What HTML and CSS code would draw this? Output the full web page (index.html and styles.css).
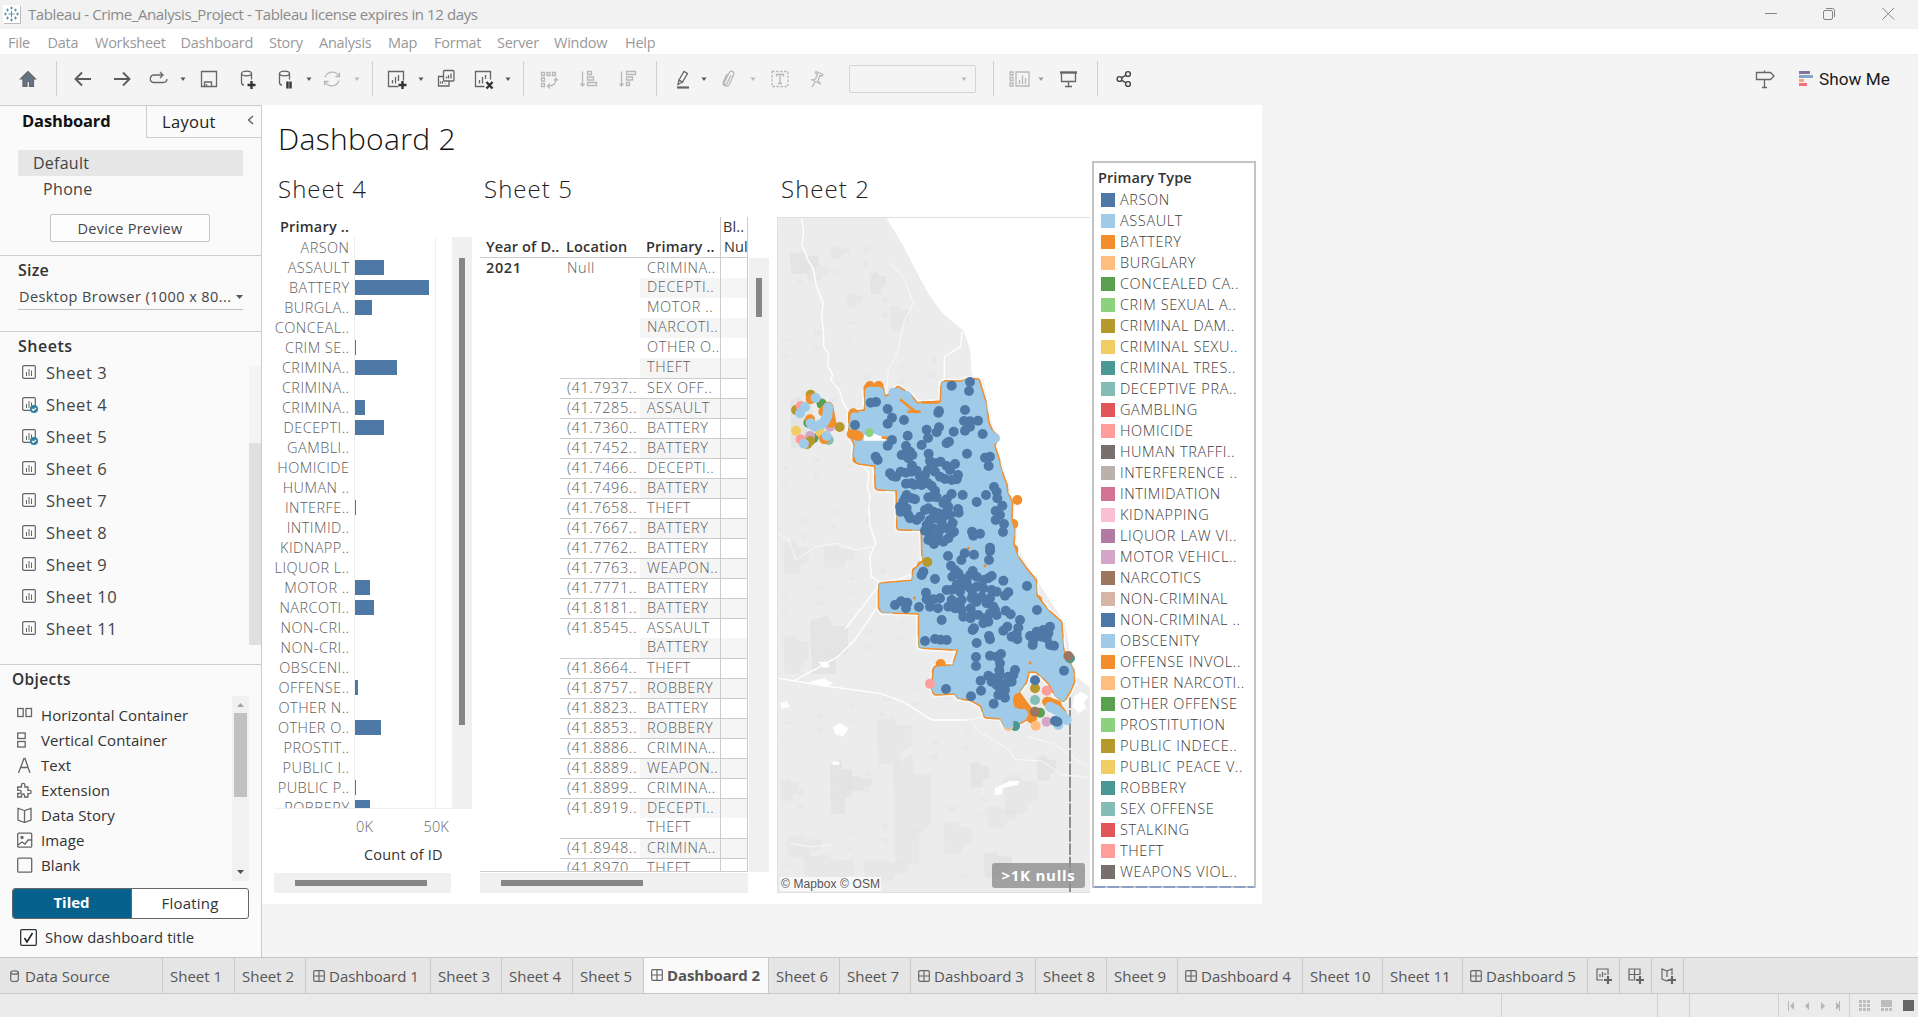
FILE: index.html
```html
<!DOCTYPE html>
<html lang="en">
<head>
<meta charset="utf-8">
<title>Tableau - Crime_Analysis_Project</title>
<link rel="stylesheet" href="styles.css">
</head>
<body>
<svg class="defs" aria-hidden="true">
  <symbol id="caret" viewBox="0 0 8 22"><path d="M1.5 9.5h5L4 13z" fill="currentColor"/></symbol>
  <symbol id="sheet" viewBox="0 0 14 14"><rect x=".7" y=".7" width="12.6" height="12.6" rx="1"/><path d="M4.500 7v4M7 4v7M9.500 5.500v5.500" stroke-width="1"/></symbol>
  <symbol id="dash" viewBox="0 0 12 12"><rect x=".7" y=".7" width="10.600" height="10.600" rx="1"/><path d="M6 1v10M1 6h10"/></symbol>
</svg>
<div class="app">
  <header class="titlebar">
    <svg class="logo" width="18" height="19" viewBox="0 0 18 19"><rect x="0" y="0" width="17" height="18" fill="#fff"/><path d="M17.500 1v17.500H1" fill="none" stroke="#bbb"/><path d="M8.500 6v6M5.500 9h6M8.500 1.500v3M7 3h3M8.500 13.500v3M7 15h3M1 9h3M2.500 7.500v3M13 9h3M14.500 7.500v3M4.500 3.500v3M3 5h3M12.500 3.500v3M11 5h3M4.500 11.500v3M3 13h3M12.500 11.500v3M11 13h3" stroke="#5a94b8" fill="none"/></svg>
    <span class="title">Tableau - Crime_Analysis_Project - Tableau license expires in 12 days</span>
    <svg class="win" width="140" height="20" viewBox="0 0 140 20" fill="none" stroke="#858585"><path d="M5 9.500h12M122.500 4l11.500 11.500M134 4l-11.500 11.500"/><rect x="63.500" y="6.500" width="9" height="9" rx="1.500"/><path d="M66 4.500h6.500a2 2 0 0 1 2 2V13"/></svg>
  </header>
  <nav class="menu"><span>File</span><span>Data</span><span>Worksheet</span><span>Dashboard</span><span>Story</span><span>Analysis</span><span>Map</span><span>Format</span><span>Server</span><span>Window</span><span>Help</span></nav>
  <div class="toolbar">
    <svg class="ic" viewBox="0 0 22 22"><path d="M11 3.500L3.500 11H6v7.500h4v-5h2.500v5h4V11h2z" fill="#667384"/></svg>
    <i class="sep"></i>
    <svg class="ic bold" viewBox="0 0 22 22"><path d="M19 11H4M10 4.500L3.500 11l6.500 6.500"/></svg>
    <svg class="ic bold" viewBox="0 0 22 22"><path d="M3 11h15M12 4.500l6.500 6.500-6.500 6.500"/></svg>
    <svg class="ic mid" viewBox="0 0 22 22"><path d="M15 7H5.500a3.800 3.800 0 0 0 0 7.500h10a3.700 3.700 0 0 0 3.500-3.500M12 4l3 3-3 3"/></svg>
    <svg class="car"><use href="#caret"/></svg>
    <svg class="ic mid" viewBox="0 0 22 22"><path d="M3.500 3.500h15v15h-15zM6.500 18v-4h7v4M8.500 16v2"/></svg>
    <svg class="ic mid" viewBox="0 0 22 22"><ellipse cx="9.500" cy="5.500" rx="5" ry="2.300"/><path d="M4.500 5.500v9.500a2.500 2.500 0 0 0 2.500 2M14.500 5.500v6"/><path class="heavy" d="M14.500 13v8M10.500 17h8"/></svg>
    <svg class="ic mid" viewBox="0 0 22 22"><ellipse cx="10.500" cy="5.500" rx="5" ry="2.300"/><path d="M5.500 5.500v9.500a2.500 2.500 0 0 0 2.500 2M15.500 5.500v6"/><path class="heavy" d="M13.500 13.500v7M16.500 13.500v7"/></svg>
    <svg class="car"><use href="#caret"/></svg>
    <svg class="ic off" viewBox="0 0 22 22"><path d="M4 9.500a7.500 7.500 0 0 1 14-1M18 12.500a7.500 7.500 0 0 1-14 1M18.500 4.500v4h-4M3.500 17.500v-4h4"/></svg>
    <svg class="car faint"><use href="#caret"/></svg>
    <i class="sep"></i>
    <svg class="ic mid" viewBox="0 0 22 22"><path d="M11.500 18.500h-10v-15h15v9M5.500 12v3.500M8.500 9v6.500M11.500 7v6"/><path class="heavy" d="M15.500 13v8M11.500 17h8"/></svg>
    <svg class="car"><use href="#caret"/></svg>
    <svg class="ic mid" viewBox="0 0 22 22"><rect x="8.500" y="2.500" width="10.500" height="10.500" rx="1"/><path d="M11.500 8.500v2M13.500 7v3.500M16 5.500v5M8.500 8.500h-5v9.500h10.500v-5M5.500 13.500v2M7.500 13v2.500M10 15v.5"/></svg>
    <svg class="ic mid" viewBox="0 0 22 22"><path d="M10.500 18.500h-9v-15h15v8M5.500 12v3.500M8.500 9v6.500M11.500 7v4"/><path class="heavy" d="M12.500 14l6 6.500M18.500 14l-6 6.500"/></svg>
    <svg class="car"><use href="#caret"/></svg>
    <i class="sep"></i>
    <svg class="ic off" viewBox="0 0 22 22"><path d="M3.500 4.500h3v3h-3zM9 4.500h3v3H9zM14.500 4.500h3v3h-3zM3.500 10h3v3h-3zM3.500 15.500h3v3h-3zM18 11c0 4-2 7-8 7M16 12.500l2-2 2 2M12 15.500L9.500 18l2.500 2.500"/></svg>
    <svg class="ic off" viewBox="0 0 22 22"><path d="M4.500 3.500V18M2.500 15.500l2 2.500 2-2.500M9.500 3.500h4v3h-4zM9.500 9h6v3h-6zM9.500 14.500h9v3h-9z"/></svg>
    <svg class="ic off" viewBox="0 0 22 22"><path d="M4.500 3.500V18M2.500 15.500l2 2.500 2-2.500M9.500 3.500h9v3h-9zM9.500 9h6v3h-6zM9.500 14.500h3v3h-3z"/></svg>
    <i class="sep"></i>
    <svg class="ic mid" viewBox="0 0 22 22"><path d="M7 12l5-8.500 3.500 2-5 8.500zM7 12l-1 4.500 4.500-2.500"/><path d="M5 19.500h12" stroke-width="2.200"/></svg>
    <svg class="car"><use href="#caret"/></svg>
    <svg class="ic off" viewBox="0 0 22 22"><path d="M13 7l-4 8.500c-1 2-3.500 1-2.700-1L11 5c1.500-3.500 6-1.500 4.500 2l-4 9c-2 4-8 2-6-2.500L9 6"/></svg>
    <svg class="car faint"><use href="#caret"/></svg>
    <svg class="ic off" viewBox="0 0 22 22"><rect x="3" y="3.500" width="16" height="15" stroke-dasharray="2.500 1.500"/><path d="M7.500 8.500v-2h7v2M11 6.500v9M9 15.500h4"/></svg>
    <svg class="ic off" viewBox="0 0 22 22"><path d="M10 3.500l7 3-1 1.500-2-.5-2 5 2 3-8-3.500 3.500-1 2-5-2-1zM9 14l-3 5"/></svg>
    <div class="select"><svg class="car faint"><use href="#caret"/></svg></div>
    <i class="sep"></i>
    <svg class="ic off" viewBox="0 0 22 22"><path d="M2 4h3v3H2zM2 9.500h3v3H2zM2 15h3v3H2zM8 4h13v14H8zM11.500 12v4M14.500 7.500V16M17.500 10v6"/></svg>
    <svg class="car faint2"><use href="#caret"/></svg>
    <svg class="ic mid" viewBox="0 0 22 22"><path d="M4.500 5v8.500h14V5M11.500 13.500v5M8 18.500h7"/><path d="M3 4.500h17" stroke-width="2.400"/></svg>
    <i class="sep"></i>
    <svg class="ic dark" viewBox="0 0 22 22"><circle cx="6.500" cy="11" r="2.400"/><circle cx="15" cy="6" r="2.400"/><circle cx="15" cy="16" r="2.400"/><path d="M8.700 9.700l4-2.400M8.700 12.300l4 2.400"/></svg>
    <svg class="ic mid" viewBox="0 0 22 22"><path d="M10.500 2.500v2M10.500 11.500v8M8 19.500h5M2.500 4.500h14l3.500 3.500-3.500 3.500h-14z"/></svg>
    <div class="showme"><svg width="15" height="16" viewBox="0 0 15 16"><path d="M0 0h11v3H0z" fill="#86739a"/><path d="M0 4h14v3H0z" fill="#84a4ca"/><path d="M0 8h5v3H0z" fill="#f3a77c"/><path d="M0 12h8v3H0z" fill="#f56f81"/></svg><span>Show Me</span></div>
  </div>
  <main class="work">
    <aside class="side">
      <div class="sidetabs"><b>Dashboard</b><div class="laytab"><span>Layout</span><svg width="8" height="12" viewBox="0 0 8 12"><path d="M6 2L1.500 6 6 10" fill="none" stroke="#555" stroke-width="1.200"/></svg></div></div>
      <section class="device"><div class="default">Default</div><div class="phone">Phone</div><div class="preview">Device Preview</div></section>
      <section class="size"><h3>Size</h3><div class="sizesel"><span>Desktop Browser (1000 x 80...</span><svg width="7" height="4" viewBox="0 0 7 4"><path d="M0 0h7L3.500 4z" fill="#555"/></svg></div></section>
      <section class="sheets"><h3>Sheets</h3><div class="sheetbox"><div class="list" id="sheetList"></div><div class="sb1"><i></i></div></div></section>
      <section class="objects"><h4>Objects</h4>
        <div class="objbox"><div class="objlist">
          <div><svg viewBox="0 0 16 16"><rect x=".7" y="1.500" width="5.500" height="8"/><rect x="9" y="1.500" width="5.500" height="8"/></svg>Horizontal Container</div>
          <div><svg viewBox="0 0 16 16"><rect x=".7" y="1" width="7.500" height="5.500"/><rect x=".7" y="9.500" width="7.500" height="5.500"/></svg>Vertical Container</div>
          <div><svg viewBox="0 0 16 16"><path d="M1.500 16L7 1.500h1L13 16M3.500 10.500h8"/></svg>Text</div>
          <div><svg viewBox="0 0 16 16"><path d="M.7 5H4.500V3a1.700 1.700 0 0 1 3.400 0v2h3v3.300h1.600a1.700 1.700 0 0 1 0 3.400h-1.600V15H7.500v-1.500a1.500 1.500 0 0 0-3 0V15H.7v-3.500h2a1.600 1.600 0 0 0 0-3.200h-2z"/></svg>Extension</div>
          <div><svg viewBox="0 0 16 16"><path d="M7.500 3.500L1 1.500v11.500l6.500 2.500 6.500-2.500V1.500zM7.500 3.500v12"/></svg>Data Story</div>
          <div><svg viewBox="0 0 16 16"><rect x=".7" y="1.200" width="14" height="14" rx="1"/><path d="M1 13l4-3 3 2 3-4 4 0"/><circle cx="5" cy="5.500" r="1" fill="#666"/></svg>Image</div>
          <div><svg viewBox="0 0 16 16"><rect x=".7" y="1.200" width="14" height="14" rx="1"/></svg>Blank</div>
        </div>
        <div class="sb2"><svg width="17" height="17"><path d="M5 11h7L8.500 7z" fill="#a3a3a3"/></svg><i></i><svg width="17" height="17"><path d="M5 6h7l-3.500 4z" fill="#505050"/></svg></div></div>
        <div class="toggle"><b>Tiled</b><span>Floating</span></div>
        <div class="check"><svg width="17" height="17" viewBox="0 0 17 17"><rect x=".7" y=".7" width="15.600" height="15.600" rx="1" fill="#fff" stroke="#333" stroke-width="1.300"/><path d="M4.500 9l2.500 4 5.500-9" fill="none" stroke="#222" stroke-width="1.600"/></svg><span>Show dashboard title</span></div>
      </section>
    </aside>
    <div class="canvas">
      <h1>Dashboard 2</h1>
      <div class="views">
        <section class="v4"><h2>Sheet 4</h2>
          <div class="v4head">Primary ..</div>
          <div class="v4body"><div class="bars" id="bars"></div><div class="sbv sbv4"><i></i></div></div>
          <div class="axis"><span>0K</span><span>50K</span></div>
          <div class="axname">Count of ID</div>
          <div class="sbh sbh4"><i></i></div>
        </section>
        <section class="v5"><h2>Sheet 5</h2>
          <div class="v5head"><b>Year of D..</b><b>Location</b><b>Primary ..</b><b class="bl"><span>Bl..</span><span>Null</span></b></div>
          <div class="v5body"><div class="rows" id="rows"></div><div class="sbv sbv5"><i></i></div></div>
          <div class="sbh sbh5"><i></i></div>
        </section>
        <section class="v2"><h2>Sheet 2</h2>
          <div class="map"><svg id="map" width="312" height="674" viewBox="24 -426 936 2022"></svg>
            <span class="copy">© Mapbox © OSM</span><span class="nulls">&gt;1K nulls</span></div>
        </section>
        <section class="legend"><b>Primary Type</b><div class="keys" id="legend"></div><div class="more"></div></section>
      </div>
    </div>
  </main>
  <nav class="tabs" id="tabs"></nav>
  <footer class="status"><i></i><i></i><i></i><i></i>
    <div class="nav"><svg width="52" height="10" viewBox="0 0 52 10" fill="#b5b5b5"><path d="M0 0h1v10H0zM6 1v8L2 5zM21 1v8l-4-4zM33 1v8l4-4zM48 1v8l4-4zM52 0h-1v10h1z"/></svg></div>
    <div class="nav2"><svg width="62" height="12" viewBox="0 0 62 12"><path d="M0 0h3v3H0zM4 0h3v3H4zM8 0h3v3H8zM0 4h3v3H0zM4 4h3v3H4zM8 4h3v3H8zM0 8h3v3H0zM4 8h3v3H4zM8 8h3v3H8zM22 0h11v7H22zM22 8h3v3h-3zM26 8h3v3h-3zM30 8h3v3h-3z" fill="#bdbdbd"/><path d="M44 0h11v11H44z" fill="#666"/></svg></div>
  </footer>
</div>
<script src="app.js"></script>
</body>
</html>
```
FILE: styles.css
```css
*{box-sizing:border-box}
html,body{margin:0;height:100%}
body{font-family:"Open Sans","Noto Sans",sans-serif;color:#333;background:#f4f4f4;overflow:hidden}
h1,h2,h3,h4{margin:0}
i{display:block}
svg{display:block;flex:none}
.defs{position:absolute;width:0;height:0}
.app{display:flex;flex-direction:column;width:1918px;height:1017px}
.titlebar{height:29px;background:#f2f2f2;display:flex;align-items:center;padding:0 18px 0 3px}
.title{margin-left:7px;font-size:15px;letter-spacing:-.4px;color:#8a8a8a;white-space:nowrap;padding-bottom:1px}
.win{margin-left:auto;margin-top:-1px}
.menu{height:25px;background:#fff;display:grid;grid-template-columns:39.500px 47.500px 85.500px 88.500px 50px 69px 46px 63px 57px 71px 40px;padding-left:8px;font-size:14.500px;letter-spacing:-.25px;line-height:27px;color:#999}
.toolbar{height:51px;background:#f4f4f4;display:grid;align-items:center;padding:0 0 3px 17px;border-top:1px solid #efefef;
grid-template-columns:39px 16px 39px 37px 31px 19px 39px 37px 31px 16px 32px 19px 15px 30px 18px 39px 30px 19px 15px 40px 39px 39px 16px 28px 18px 31px 20px 37px 43px 144px 15px 29px 20px 40px 16px 641px 45px auto}
.ic{width:22px;height:22px;fill:none;stroke:#666;stroke-width:1.200}
.bold{stroke:#5c5c5c;stroke-width:1.900}
.mid{stroke:#666;stroke-width:1.300}
.dark{stroke:#444;stroke-width:1.400}
.off{stroke:#b8b8b8;stroke-width:1.300}
.heavy{stroke:#333;stroke-width:2.400}
.car{width:8px;height:22px;color:#555}
.faint{color:#b8b8b8}
.faint2{color:#999}
.sep{width:1px;height:35px;background:#d0d0d0}
.select{width:127px;height:28px;border:1px solid #d3d3d3;border-radius:2px;display:flex;align-items:center;justify-content:flex-end;padding-right:7px}
.showme{display:flex;align-items:center;gap:5px;font-size:17.200px;font-family:Roboto,sans-serif;font-weight:400;color:#1a1a1a;white-space:nowrap}
.work{height:852px;display:flex;background:#f4f4f4}
.side{width:262px;background:#fafafa;border-right:1px solid #ccc;border-top:1px solid #ccc;display:flex;flex-direction:column}
.sidetabs{height:32px;display:flex}
.sidetabs b{width:146px;padding-left:22px;font-size:16.500px;line-height:30px;color:#111;letter-spacing:-.15px}
.laytab{flex:1;border-left:1px solid #ccc;border-bottom:1px solid #ccc;display:flex;align-items:center;justify-content:space-between;padding:0 6px 0 15px;font-size:16.500px;letter-spacing:.3px;color:#222}
.laytab svg{margin-top:-3px}
.device{height:118px;padding:12px 18px 0;border-bottom:1px solid #ccc;font-size:16px;color:#444}
.default{height:26px;background:#e6e6e6;padding-left:15px;line-height:26px;letter-spacing:.25px}
.phone{height:26px;padding-left:25px;line-height:26px;letter-spacing:.35px}
.preview{width:160px;height:28px;margin:12px 0 0 32px;border:1px solid #c6c6c6;border-radius:2px;background:#fdfdfd;text-align:center;font-size:14.500px;letter-spacing:.25px;line-height:27px}
.size{height:76px;border-bottom:1px solid #ccc;padding:0 18px}
h3{font-size:16px;line-height:28px;font-weight:600;color:#333;letter-spacing:.2px}
.sheets h3{letter-spacing:.5px}
.sizesel{display:flex;justify-content:space-between;align-items:center;height:26px;border-bottom:1px solid #c0c0c0;font-size:14.500px;letter-spacing:.42px;white-space:nowrap;color:#444;padding-left:1px}
.sheets{height:333px;border-bottom:1px solid #ccc}
.sheets h3{padding-left:18px;height:24px}
.sheetbox{display:flex;justify-content:space-between;height:290px}
.list div{height:32px;display:flex;align-items:center;padding-left:22px;gap:10px;font-size:16.500px;letter-spacing:.55px;color:#444}
.sicon{position:relative;width:14px;height:14px;stroke:#666;fill:none;stroke-width:1.200}
.sicon svg{width:14px;height:14px}
.sicon .badge{position:absolute;left:8px;top:8px;width:8px;height:8px;stroke:none}
.sb1{width:12px;height:279px;margin-top:10px;background:#f4f4f4;padding-top:77px}
.sb1 i{height:202px;background:#e0e0e0}
.objects{padding-left:12px}
h4{font-size:15.500px;line-height:28px;height:31px;font-weight:550;letter-spacing:.35px;color:#333}
.objbox{display:flex;justify-content:space-between;width:237px;height:185px;overflow:hidden}
.objlist{padding-top:6px}
.objlist div{height:25px;display:flex;align-items:center;gap:8px;padding-left:5px;font-size:15px;letter-spacing:.08px;color:#333;white-space:nowrap}
.objlist svg{width:16px;height:16px;fill:none;stroke:#666;stroke-width:1.300}
.sb2{width:17px;background:#f1f1f1;display:flex;flex-direction:column}
.sb2 i{width:13px;height:84px;background:#c1c1c1;margin:0 2px auto}
.toggle{display:flex;width:237px;height:31px;margin-top:7px;border:1px solid #666;border-radius:3px;background:#fff;text-align:center;font-size:15px;line-height:28px;overflow:hidden}
.toggle b{width:120px;background:#06628c;color:#fff;margin:-1px 0 -1px -1px;line-height:29px;border-right:1px solid #666}
.toggle span{flex:1;letter-spacing:.2px}
.check{display:flex;align-items:center;gap:8px;padding-left:8px;margin-top:8px;font-size:14.800px;letter-spacing:.15px;white-space:nowrap}
.canvas{width:1000px;height:799px;background:#fff;padding-left:12px}
h1{font-weight:320;font-size:30px;line-height:40px;height:56px;padding:14px 0 0 4px;color:#111;letter-spacing:.3px;white-space:nowrap}
h2{font-weight:320;font-size:24px;line-height:40px;height:56px;padding:8px 0 0 4px;color:#222;letter-spacing:1.050px;white-space:nowrap}
.views{display:flex}
.v4{width:206px}
.v4head{font-size:14.500px;font-weight:600;letter-spacing:.2px;line-height:20px;padding-left:6px;height:20px}
.v4body{height:572px;display:flex;overflow:hidden}
.bars{width:178px;overflow:hidden;border-bottom:1px solid #f0f0f0}
.bar{height:20px;display:grid;grid-template-columns:75.500px 5.500px 81px 1fr;align-items:center;font-size:14.500px;font-weight:350;letter-spacing:.45px;color:#5c5c5c}
.bar span{text-align:right;white-space:nowrap;justify-self:end}
.bar u{grid-column:3;height:20px;border-left:1px solid #eee;border-right:1px solid #eee;padding:3px 0 2px;margin-left:-1px}
.bar u i{height:15px;background:#4e79a7}
.sbv,.sbh{background:#f0f0f0}
.sbv{width:20px}
.sbv i{width:6px;margin-left:7px;background:#868686}
.sbh{height:20px;padding-top:7px}
.sbh i{height:6px;background:#868686}
.sbv4{padding-top:21px}
.sbv4 i{height:467px}
.axis{display:flex;justify-content:space-between;padding-left:82px;width:175px;font-size:14.500px;letter-spacing:.2px;font-weight:350;line-height:35px;height:34px;color:#666}
.axname{font-size:14.500px;font-weight:500;letter-spacing:.2px;padding-left:90px;line-height:23px;height:30px}
.sbh4{width:177px}
.sbh4 i{width:132px;margin-left:21px}
.v5{width:297px}
.v5head{width:268px;height:41px;display:grid;grid-template-columns:80px 80px 80px 28px;align-items:end;border-bottom:1px solid #ccc;font-size:14.500px;letter-spacing:.15px;line-height:20px}
.v5head b{padding-left:6px;white-space:nowrap;font-weight:600}
.v5head .bl{font-weight:500;display:flex;flex-direction:column;border-left:1px solid #ccc;border-right:1px solid #ccc;height:40px;padding-left:2px;overflow:hidden}
.bl span:last-child{padding-left:1px}
.v5body{display:flex;height:614px;gap:1px}
.rows{width:268px;overflow:hidden;border-bottom:1px solid #ccc}
.row{display:grid;grid-template-columns:80px 80px 80px 28px;height:20px;line-height:18px;font-size:14.500px;font-weight:350;letter-spacing:.6px;color:#5c5c5c}
.row:first-child{line-height:19px}
.row span{padding-left:7px;white-space:nowrap;overflow:hidden}
.row b{padding-left:6px;font-weight:600;color:#333}
.row .cell{border-left:1px solid #ccc;border-right:1px solid #ccc}
.row.band span:nth-child(n+3){background:#f5f5f5}
.row.line span:nth-child(n+2){border-top:1px solid #ccc}
.sbv5{padding-top:20px}
.sbv5 i{height:39px}
.sbh5{width:268px;margin-top:1px}
.sbh5 i{width:142px;margin-left:21px}
.v2{width:315px}
.map{position:relative;width:313px;height:676px;border:1px solid #e0e0e0}
.copy{position:absolute;left:2px;bottom:1px;background:rgba(255,255,255,.65);font:12px/14px "Liberation Sans",sans-serif;letter-spacing:.1px;padding:0 1px;color:#555;white-space:nowrap}
.nulls{position:absolute;right:4px;bottom:4px;width:93px;height:25px;border-radius:3px;background:rgba(140,140,140,.78);color:#fff;font-weight:700;font-size:15px;letter-spacing:.75px;line-height:25px;text-align:center;white-space:nowrap}
.legend{width:164px;height:727px;border:2px solid #c4c4c4;border-bottom:0;padding:4px 0 0 4px;font-size:14.500px}
.legend b{font-weight:600;line-height:21px;height:22px;display:block;letter-spacing:.1px}
.keys div{height:21px;display:flex;align-items:center;gap:5px;padding-left:3px;white-space:nowrap;color:#3c3c3c;font-weight:350;letter-spacing:.62px}
.keys i{width:14px;height:14px}
.more{height:2px;margin:4px 0 0 -4px;background:repeating-linear-gradient(90deg,#8c9fc4 0 11px,#c4c4c4 11px 14px)}
.tabs{height:37px;background:#e5e5e5;border-top:1px solid #c6c6c6;border-bottom:1px solid #c9c9c9;display:flex;font-size:15px;color:#555}
.tab{border-right:1px solid #c9c9c9;display:flex;align-items:center;gap:4px;padding-left:7px;white-space:nowrap;width:71px}
.tab.src{width:163px;padding-left:10px;gap:6px}
.tab.wide{width:80px}
.tab.db{width:125px}
.tab.first{width:72px}
.tab.on{background:#fafafa;font-weight:700;letter-spacing:-.1px;padding-bottom:2px}
.tab.add{width:32px;padding-left:7px}
.tab svg{fill:none;stroke:#666;stroke-width:1.200}
.status{height:23px;background:#ebebeb;display:grid;grid-template-columns:1502px 156px 32px 32px 57px 71px 1fr}
.status i,.nav{border-right:1px solid #cfcfcf}
.nav{grid-column:6;padding:7px 0 0 9px}
.status i:nth-child(4){grid-column:4/6}
.nav2{padding:6px 0 0 9px}
```
FILE: app.js
```js
const $ = (id) => document.getElementById(id);
const icon = (id, w) => `<svg width="${w}" height="${w}"><use href="#${id}"/></svg>`;

$('sheetList').innerHTML = [3, 4, 5, 6, 7, 8, 9, 10, 11].map((n) =>
  `<div><span class="sicon">${icon('sheet', 14)}${n === 4 || n === 5
    ? '<svg class="badge" viewBox="0 0 8 8"><circle cx="4" cy="4" r="4" fill="#317f9f"/><path d="M2 4l1.500 1.500L6 2.800" stroke="#fff" fill="none"/></svg>' : ''}</span>Sheet ${n}</div>`).join('');

const bars = [['ARSON', 0], ['ASSAULT', 29], ['BATTERY', 74], ['BURGLA..', 17], ['CONCEAL..', 0], ['CRIM SE..', 1], ['CRIMINA..', 42], ['CRIMINA..', 0], ['CRIMINA..', 10], ['DECEPTI..', 29], ['GAMBLI..', 0], ['HOMICIDE', 0], ['HUMAN ..', 0], ['INTERFE..', 1], ['INTIMID..', 0], ['KIDNAPP..', 0], ['LIQUOR L..', 0], ['MOTOR ..', 15], ['NARCOTI..', 19], ['NON-CRI..', 0], ['NON-CRI..', 0], ['OBSCENI..', 0], ['OFFENSE..', 3], ['OTHER N..', 0], ['OTHER O..', 26], ['PROSTIT..', 0], ['PUBLIC I..', 0], ['PUBLIC P..', 1], ['ROBBERY', 15]];
$('bars').innerHTML = bars.map(([t, w]) => `<div class="bar"><span>${t}</span><u><i style="width:${w}px"></i></u></div>`).join('');

const rows = [['Null', 'CRIMINA..'], ['', 'DECEPTI..'], ['', 'MOTOR ..'], ['', 'NARCOTI..'], ['', 'OTHER O..'], ['', 'THEFT'], ['7937', 'SEX OFF..'], ['7285', 'ASSAULT'], ['7360', 'BATTERY'], ['7452', 'BATTERY'], ['7466', 'DECEPTI..'], ['7496', 'BATTERY'], ['7658', 'THEFT'], ['7667', 'BATTERY'], ['7762', 'BATTERY'], ['7763', 'WEAPON..'], ['7771', 'BATTERY'], ['8181', 'BATTERY'], ['8545', 'ASSAULT'], ['', 'BATTERY'], ['8664', 'THEFT'], ['8757', 'ROBBERY'], ['8823', 'BATTERY'], ['8853', 'ROBBERY'], ['8886', 'CRIMINA..'], ['8889', 'WEAPON..'], ['8899', 'CRIMINA..'], ['8919', 'DECEPTI..'], ['', 'THEFT'], ['8948', 'CRIMINA..'], ['8970', 'THEFT']];
$('rows').innerHTML = rows.map(([l, t], i) => `<div class="row${i % 2 ? ' band' : ''}${i && l ? ' line' : ''}"><b>${i ? '' : '2021'}</b><span>${l === 'Null' || !l ? l : '(41.' + l + '..'}</span><span>${t}</span><span class="cell"></span></div>`).join('');

const names = ['ARSON', 'ASSAULT', 'BATTERY', 'BURGLARY', 'CONCEALED CA..', 'CRIM SEXUAL A..', 'CRIMINAL DAM..', 'CRIMINAL SEXU..', 'CRIMINAL TRES..', 'DECEPTIVE PRA..', 'GAMBLING', 'HOMICIDE', 'HUMAN TRAFFI..', 'INTERFERENCE ..', 'INTIMIDATION', 'KIDNAPPING', 'LIQUOR LAW VI..', 'MOTOR VEHICL..', 'NARCOTICS', 'NON-CRIMINAL', 'NON-CRIMINAL ..', 'OBSCENITY', 'OFFENSE INVOL..', 'OTHER NARCOTI..', 'OTHER OFFENSE', 'PROSTITUTION', 'PUBLIC INDECE..', 'PUBLIC PEACE V..', 'ROBBERY', 'SEX OFFENSE', 'STALKING', 'THEFT', 'WEAPONS VIOL..'];
const colors = ['#4e79a7', '#a0cbe8', '#f28e2b', '#ffbe7d', '#59a14f', '#8cd17d', '#b6992d', '#f1ce63', '#499894', '#86bcb6', '#e15759', '#ff9d9a', '#79706e', '#bab0ac', '#d37295', '#fabfd2', '#b07aa1', '#d4a6c8', '#9d7660', '#d7b5a6'];
$('legend').innerHTML = names.map((n, i) => `<div><i style="background:${colors[i % 20]}"></i>${n}</div>`).join('');

const src = '<svg width="9" height="12" viewBox="0 0 9 12"><ellipse cx="4.500" cy="2.500" rx="3.800" ry="1.700"/><path d="M.7 2.500v7.500c0 2 7.600 2 7.600 0V2.500"/></svg>';
const plus = '<path d="M13 10v8M9 14h8" stroke-width="2.200"/>';
const tabs = [['src', 'Data Source'], ['first', 'Sheet 1'], ['', 'Sheet 2'], ['db', 'Dashboard 1'], ['', 'Sheet 3'], ['', 'Sheet 4'], ['', 'Sheet 5'], ['db on', 'Dashboard 2'], ['', 'Sheet 6'], ['', 'Sheet 7'], ['db', 'Dashboard 3'], ['', 'Sheet 8'], ['', 'Sheet 9'], ['db', 'Dashboard 4'], ['wide', 'Sheet 10'], ['wide', 'Sheet 11'], ['db', 'Dashboard 5']];
const adds = ['<path d="M8 14H2V3h11v6M5 8v3M7.500 6v5M10 7v2"/>', '<path d="M8 14H2V3h11v6M7.500 3v11M2 8.500h11"/>', '<path d="M8 5L3 3v10l5 2 1-1M8 5l5-2v6M8 5v6"/>'];
$('tabs').innerHTML = tabs.map(([c, t]) => `<div class="tab ${c}">${c === 'src' ? src : c.startsWith('db') ? icon('dash', 12) : ''}<span>${t}</span></div>`).join('')
  + adds.map((p) => `<div class="tab add"><svg width="18" height="19" viewBox="0 0 18 19">${p}${plus}</svg></div>`).join('');

/* Map: land, roads, city area and incident marks */
const dots = (fill, pts) => { let s = ''; for (let i = 0; i < pts.length; i += 2) s += `<circle cx="${pts[i]}" cy="${pts[i + 1]}" r="15"/>`; return `<g fill="${fill}">${s}</g>`; };
const band = (color, d) => `<path d="${d}" fill="none" stroke="${color}" stroke-width="30" stroke-linecap="round" stroke-linejoin="round"/>`;
const city = 'M523 73L575 73 590 66 620 66 628 93 640 132 647 187 657 212 674 232 664 257 676 292 684 322 692 352 702 377 704 398 718 430 716 480 726 512 722 552 737 594 762 630 790 664 792 710 828 756 866 790 872 872 884 895 902 932 904 965 892 992 878 1015 864 1003 856 990 845 968 828 950 800 927 770 927 760 965 735 1000 720 1020 728 1050 762 1055 765 1072 728 1092 708 1092 698 1067 650 1064 640 1032 604 1012 568 1007 558 992 498 995 493 985 500 928 555 923 575 862 455 855 455 752 340 749 335 740 335 678 433 670 438 635 468 608 465 580 463 502 390 500 388 384 325 380 323 310 266 302 258 285 262 250 246 220 246 165 293 158 293 93 332 90 340 123 370 106 385 90 418 112 436 138 520 133Z';
let patches = '';
const greys = [[60,-330,90,60],[180,-350,60,30],[110,-300,70,50],[300,-270,50,60],[360,-170,60,70],[230,-210,50,40],[60,110,70,140],[40,540,80,90],[160,550,100,60],[120,770,120,160],[40,820,80,110],[320,1070,110,130],[180,1200,70,150],[370,1200,120,300],[700,1240,110,110],[230,1240,80,40],[50,1420,110,60],[100,1480,160,90],[800,1180,60,70],[520,1380,90,90],[650,1330,90,60],[600,1200,60,70],[30,1250,60,60],[280,1490,140,60],[640,1470,90,70]];
greys.forEach(([x, y, w, h], i) => { patches += `<path d="M${x} ${y + 12}l${w * .45} -${h * .1} ${w * .1} ${h * .2} ${w * .4} 0 0 ${h * .5} -${w * .3} ${h * .1} 0 ${h * .3} -${w * .6} 0z" opacity="${i % 3 ? .4 : .75}"/>`; });
for (let i = 0; i < 130; i++) { const x = 30 + (i * 197) % 640, y = -400 + (i * 331) % 1960; if (x < 300 + (y + 450) * .45) patches += `<path d="M${x} ${y}l${12 + i % 17} -3 3 ${8 + i % 13} -${12 + i % 15} 3z" opacity=".35"/>`; }
$('map').innerHTML = `
<rect x="20" y="-430" width="950" height="2040" fill="#fff"/>
<path fill="#ececec" d="M20-430H347L400-342 440-263 480-191 520-138 580-88 600-33 606 46 640 60 700 350 740 560 800 660 885 790 912 945 962 985V1610H20z"/>
<g fill="#e1e1e1">${patches}</g>
<path fill="#fff" d="M120 965l40-10 30 15-25 12zM190 1100l20-10 25 15-15 25-25-8zM30 1030l20-6 10 16-25 6zM675 1285l45-22 28 0-5 12-45 8-3 20-20 3zM145 905l25 0 10 15-20 4zM912 1010l20-15 25 15-15 15 5 20-20 15-20-20zM188 1205l20 0 0 10-20 0z"/>
<g fill="none" stroke="#fff">
<path stroke-width="4" d="M95-430l6 50-5 35 18 45 15 25 10 50 20 55-4 40 6 50 0 40 15 20-3 35 15 30-5 15 25 30 12 40 20 30 2 60 15 60 25 40 15 20-5 40 8 30-4 40 5 50 16 50-18 40 5 60 25 15 12 25-2 25-30 45-55 80-50 50-130 72M22 955L150 975 240 988 330 1000 405 1028 485 1080 590 1080M430 640L320 685 225 808M523 65V-10L572-40 576-85"/>
<path stroke-width="2" d="M360-290l40 40 30 80-30 60-15 80-30 60-5 80M22 520l35 20 20 60 60-40 60-10 60 20 50-10M605 1083l20 30 90 55 20 30 80 5 60 40 80 10M60 1450l60 10 60-5M590 1080l60-10M770 1130l80 20 100 70"/>
</g>
<path d="M900 1010V1600" stroke="#7c7c7c" stroke-width="5" stroke-dasharray="35 5"/>
<path d="${city}" fill="#fff" stroke="#f7f7f7" stroke-width="34" stroke-linejoin="round"/>
<path d="${city}" fill="#a0cbe8" stroke="#c0a56a" stroke-width="22" stroke-linejoin="round"/>
<path d="${city}" fill="none" stroke="#f28e2b" stroke-width="24" stroke-linejoin="round" stroke-dasharray="60 14 90 30"/>
${dots('#f28e2b', [300,78,326,78,295,85,530,75,250,165,245,222,260,228,262,297,742,420,730,492,730,568,802,720,575,865,512,912,500,935,430,160,412,140,350,235,440,635,455,618])}
${band('#f28e2b', 'M742 1010L750 1030 775 1055 785 1075M832 1025L860 1040 875 1060M865 960L862 940M897 950V965')}
<path d="${city}" fill="#a0cbe8" stroke="#a0cbe8" stroke-width="15" stroke-linejoin="round"/>
${dots('#b6992d', [122,104,78,150,209,201,795,985,472,606])}
${dots('#ff9d9a', [92,138,92,238,480,971,830,992,155,225])}
${dots('#86bcb6', [155,130,176,240,795,1020])}${dots('#59a14f', [155,132,115,188,130,235,810,1058])}
${dots('#d4a6c8', [120,228,180,200,830,1085])}${dots('#f1ce63', [78,212,150,215])}
${band('#f28e2b', 'M122 118V116M160 155L175 140 184 188 165 185M120 178V182M163 238V236M745 1015L775 1055 785 1075M250 170V160M248 222L265 228M832 1025L860 1035')}
${dots('#499894', [735,1098,900,895])}${dots('#ffbe7d', [797,1097,715,1098])}${dots('#9d7660', [795,1055,895,888])}
${dots('#b6992d', [120,243,112,252])}
<path d="M283 225L300 215 330 228 352 232 345 242H280z" fill="#fff"/><circle cx="298" cy="218" r="13" fill="#8cd17d"/>
<path d="M335 232L365 235M455 127H508M390 118L440 158M412 155H452M430 712L437 716M592 568L598 562M642 615L648 620M778 905L783 912" stroke="#f28e2b" stroke-width="8"/>
${band('#a0cbe8', 'M122 190L135 200 160 190 172 168 174 142M300 95H323M705 1072L740 1065 760 1062M715 1085V1092M840 1040L860 1050 890 1080M865 1085V1095M868 985L885 960 898 945M868 985V1000')}
${dots('#a0cbe8', [137,114,105,141,90,160,170,228,102,251,370,98,410,108,675,235,255,172])}
${dots('#4e79a7', [545,77,600,66,597,93,302,128,318,126,353,147,366,173,353,191,402,180,255,195,507,153,505,158,585,150,582,183,600,184,624,182,585,212,600,200,638,222,470,209,474,234,507,202,500,217,551,215,537,245,530,250,455,255,413,227,366,240,353,257,317,290,323,300,408,258,400,284,420,275,427,285,415,295,395,285,591,281,645,293,660,290,656,318,476,281,480,303,495,310,512,305,530,318,555,312,540,330,564,345,560,358,545,360,525,357,510,350,495,335,474,330,465,345,450,350,440,332,426,317,425,335,408,338,392,335,378,350,360,340,368,348,408,371,425,370,433,374,455,375,474,370,485,378,495,392,475,412,488,410,500,412,410,405,405,415,425,415,435,418,400,425,390,440,392,455,410,445,415,465,420,475,440,480,450,470,465,450,475,445,490,455,505,460,520,470,530,455,520,430,530,418,545,402,535,440,564,447,566,458,548,489,540,465,500,475,480,480,470,495,465,512,480,525,490,545,505,540,520,545,535,535,545,520,552,515,530,505,510,510,490,505,515,490,505,530,475,540,492,552,578,405,620,426,648,405,672,381,680,395,682,415,697,437,677,453,690,465,677,480,702,492,699,516,606,515,610,527,630,521,660,563,660,573,657,600,534,588,584,580,574,600,612,584,543,617,555,630,547,650,565,640,575,655,608,633,600,645,620,650,640,660,655,655,665,648,590,665,575,680,560,675,545,690,530,690,570,695,600,685,620,680,640,685,665,690,680,695,608,705,635,710,660,715,620,725,605,715,650,730,575,720,560,730,545,720,535,740,555,745,575,750,580,770,570,740,602,745,605,760,602,775,625,765,645,775,660,760,675,750,670,740,680,765,655,785,640,790,612,805,608,810,700,662,715,697,705,707,455,645,460,635,495,657,468,698,470,718,490,718,510,715,480,740,504,745,447,741,375,735,393,724,412,728,408,745,515,780,707,752,722,763,750,780,745,803,712,800,700,812,725,830,742,838,740,822,620,849,657,828,660,838,465,843,495,837,512,839,530,840,771,678,801,750,840,800,820,810,835,820,830,835,800,815,780,828,790,840,788,855,815,830,840,855,852,857,618,891,618,918,660,887,680,890,693,882,690,910,688,930,735,930,730,945,715,950,725,965,690,945,710,970,685,960,670,955,655,947,665,965,680,975,690,985,705,990,700,1000,685,1005,705,1013,632,962,633,992,603,1009,671,1031,528,987,795,961,882,932,855,1083,862,1085])}`;
```
